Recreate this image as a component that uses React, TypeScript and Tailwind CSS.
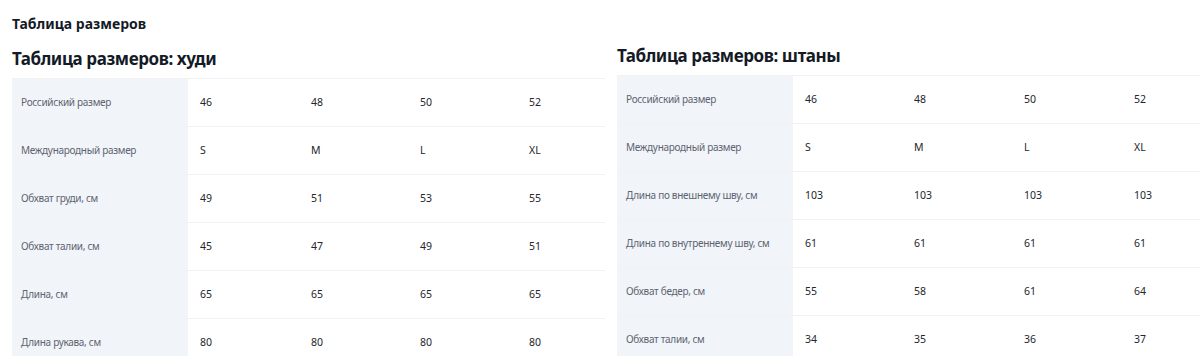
import React from "react";

const hoodie: [string, string[]][] = [
  ["Российский размер", ["46", "48", "50", "52"]],
  ["Международный размер", ["S", "M", "L", "XL"]],
  ["Обхват груди, см", ["49", "51", "53", "55"]],
  ["Обхват талии, см", ["45", "47", "49", "51"]],
  ["Длина, см", ["65", "65", "65", "65"]],
  ["Длина рукава, см", ["80", "80", "80", "80"]],
];

const pants: [string, string[]][] = [
  ["Российский размер", ["46", "48", "50", "52"]],
  ["Международный размер", ["S", "M", "L", "XL"]],
  ["Длина по внешнему шву, см", ["103", "103", "103", "103"]],
  ["Длина по внутреннему шву, см", ["61", "61", "61", "61"]],
  ["Обхват бедер, см", ["55", "58", "61", "64"]],
  ["Обхват талии, см", ["34", "35", "36", "37"]],
];

function Table({ rows, cols }: { rows: [string, string[]][]; cols: string[] }) {
  return (
    <div className="flex flex-col">
      {rows.map(([label, vals], i) => (
        <div key={i} className="flex h-[48px] border-t border-[#f1f2f4]">
          <div className="w-[176px] shrink-0 bg-[#f1f4f9] flex items-center pl-[9px] text-[10px] tracking-[-0.3px] text-[#5d6470]">
            {label}
          </div>
          {vals.map((v, j) => (
            <div key={j} className={`${cols[j]} shrink-0 flex items-center pl-[12px] text-[10.5px] text-[#23262c]`}>
              {v}
            </div>
          ))}
        </div>
      ))}
    </div>
  );
}

export default function App() {
  return (
    <div
      className="w-[1200px] h-[356px] overflow-hidden bg-white px-[12px] pt-[14px]"
      style={{ fontFamily: '"Noto Sans", "Open Sans", sans-serif' }}
    >
      <div className="text-[14px] font-bold leading-[20px] text-[#141a26]">Таблица размеров</div>
      <div className="flex gap-[12px]">
        <div className="w-[593px] shrink-0 mt-[13px]">
          <div className="text-[17px] tracking-[-0.4px] font-bold leading-[24px] text-[#141a26] mb-[7px]">Таблица размеров: худи</div>
          <Table rows={hoodie} cols={["w-[111px]", "w-[109px]", "w-[109px]", "w-[88px]"]} />
        </div>
        <div className="w-[583px] shrink-0 mt-[10px]">
          <div className="text-[17px] tracking-[-0.4px] font-bold leading-[24px] text-[#141a26] mb-[7px]">Таблица размеров: штаны</div>
          <Table rows={pants} cols={["w-[109px]", "w-[110px]", "w-[110px]", "w-[78px]"]} />
        </div>
      </div>
    </div>
  );
}
